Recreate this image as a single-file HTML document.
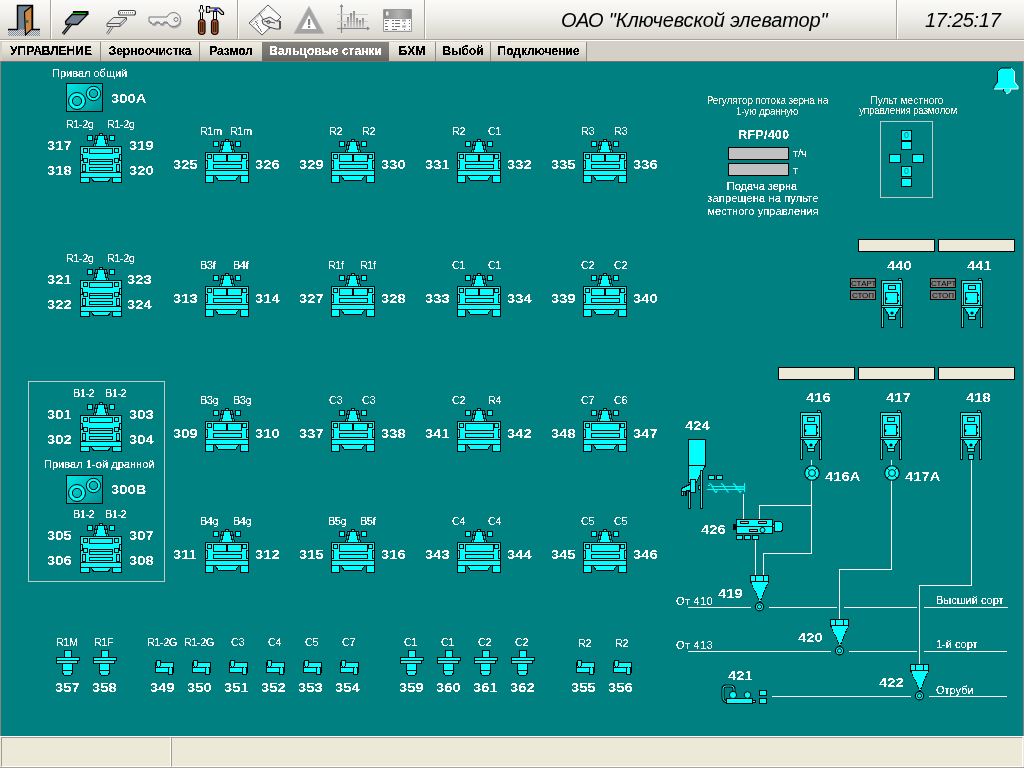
<!DOCTYPE html>
<html><head><meta charset="utf-8"><title>Вальцовые станки</title>
<style>
*{margin:0;padding:0;box-sizing:border-box}
html,body{width:1024px;height:768px;overflow:hidden;background:#d4d0c8;font-family:"Liberation Sans",sans-serif}
.t{position:absolute;white-space:nowrap;color:#fff;filter:url(#cr)}
.tab span{filter:url(#cr);display:inline-block}
.i{position:absolute;overflow:visible}
#tb{position:absolute;left:0;top:0;width:1024px;height:39px;background:linear-gradient(#fbfbfa,#f1f0ec 40%,#d8d4cc)}
.sep{position:absolute;top:0;width:2px;height:39px;background:#a8a498;border-right:1px solid #fff}
#tbl{position:absolute;left:0;top:39px;width:1024px;height:1px;background:#a8a498}
#tbw{position:absolute;left:0;top:40px;width:1024px;height:1px;background:#fff}
#tabs{position:absolute;left:0;top:41px;width:1024px;height:21px;background:#d4d0c8}
.tab{position:absolute;top:42px;height:19px;background:linear-gradient(#f0eee2,#dfdcd2 50%,#c2bfb6);font-weight:bold;font-size:12px;line-height:19px;text-align:center;color:#000;white-space:nowrap}
.tab.s{background:linear-gradient(#86847e,#76746e 60%,#66645e);color:#fff}
.tsep{position:absolute;top:42px;width:1px;height:19px;background:#8c8a84}
#main{position:absolute;left:0;top:61px;width:1024px;height:675px;background:#008080;border-left:1px solid #8c8484;border-top:1px solid #7a7070;border-right:1px solid #8c8484}
#sb{position:absolute;left:0;top:736px;width:1024px;height:32px;background:#ece9d8;border-top:1px solid #fff;border-bottom:1px solid #a8a598}
.sp{position:absolute;top:0;height:30px;border:1px solid;border-color:#a09d90 #fff #fff #a09d90;background:#ece9d8}
.box{position:absolute;border:1px solid #c8c8c8}
.gb{position:absolute;background:#c0c0c0;border:1px solid #000;box-sizing:content-box}
.cr{position:absolute;background:#ece9d8;border:1px solid #000;box-sizing:content-box}
.cb{position:absolute;background:#0ff;border:1px solid #000;box-sizing:content-box;font-size:9px;line-height:9px;text-align:center;color:#008080}
.btn{position:absolute;width:26px;height:10px;background:#808080;border:1px solid #000;font-size:8px;line-height:9px;text-align:center;color:#000;letter-spacing:0px}
.btn span{will-change:transform;display:inline-block}
.wl{position:absolute;background:#fff}
</style></head><body>

<svg width="0" height="0" style="position:absolute">
<defs>
<filter id="cr2" x="-20%" y="-60%" width="140%" height="220%"><feComponentTransfer><feFuncA type="discrete" tableValues="0 1 1 1"/></feComponentTransfer></filter>
<filter id="cr5" x="-20%" y="-60%" width="140%" height="220%"><feComponentTransfer><feFuncA type="discrete" tableValues="0 1"/></feComponentTransfer></filter>
<filter id="cr" x="-20%" y="-60%" width="140%" height="220%"><feComponentTransfer><feFuncA type="discrete" tableValues="0 0 1 1 1"/></feComponentTransfer></filter>
<linearGradient id="mg" x1="0" y1="0" x2="1" y2="1">
  <stop offset="0" stop-color="#00e8e8"/><stop offset="1" stop-color="#008c8c"/>
</linearGradient>
<symbol id="m1" viewBox="0 0 44 44">
 <g fill="#0ff" stroke="#000" stroke-width="1" shape-rendering="crispEdges">
  <rect x="8.5" y="2.5" width="5" height="5"/><rect x="30.5" y="2.5" width="5" height="5"/>
  <path d="M16,2 H28 L30,13.5 H14 Z" fill="#000" stroke="none"/>
  <path d="M19.5,3 H24.5 L27,13 H17 Z" fill="#0ff" stroke="none"/>
  <path d="M17.5,3 L15.5,13 M26.5,3 L28.5,13" stroke="#0ff" stroke-dasharray="3,1" shape-rendering="auto"/>
  <rect x="20.5" y="0.5" width="3" height="2"/>
  <rect x="0.5" y="13.5" width="43" height="23"/>
  <line x1="0" y1="31.5" x2="44" y2="31.5"/>
  <rect x="2.5" y="15.5" width="4" height="4"/><rect x="37.5" y="15.5" width="4" height="4"/>
  <rect x="0.5" y="21.5" width="2" height="8"/><rect x="41.5" y="21.5" width="2" height="8"/>
  <rect x="8.5" y="25.5" width="28" height="4"/>
  <rect x="0.5" y="36.5" width="8" height="7"/><rect x="35.5" y="36.5" width="8" height="7"/>
  <polygon points="10,36.5 34,36.5 30.5,41.5 13.5,41.5"/>
 </g>
</symbol>
<symbol id="m1d" viewBox="0 0 44 44">
 <use href="#m1"/>
 <g fill="#0ff" stroke="#000" stroke-width="1" shape-rendering="crispEdges">
  <rect x="8.5" y="15.5" width="28" height="7"/>
  <rect x="21" y="15" width="2" height="8" fill="#000" stroke="none"/>
 </g>
</symbol>
<symbol id="m1n" viewBox="0 0 44 44">
 <use href="#m1"/>
 <g fill="#0ff" stroke="#000" stroke-width="1" shape-rendering="crispEdges">
  <rect x="8.5" y="15.5" width="28" height="7"/>
 </g>
</symbol>
<symbol id="m2" viewBox="0 0 42 50">
 <g fill="#0ff" stroke="#000" stroke-width="1" shape-rendering="crispEdges">
  <rect x="7.5" y="2.5" width="5" height="5"/><rect x="29.5" y="2.5" width="5" height="5"/>
  <path d="M15,2 H27 L29,13.5 H13 Z" fill="#000" stroke="none"/>
  <path d="M18.5,3 H23.5 L26,13 H16 Z" fill="#0ff" stroke="none"/>
  <path d="M16.5,3 L14.5,13 M25.5,3 L27.5,13" stroke="#0ff" stroke-dasharray="3,1" shape-rendering="auto"/>
  <rect x="19.5" y="0.5" width="3" height="2"/>
  <rect x="0.5" y="13.5" width="41" height="31"/>
  <line x1="0" y1="39.5" x2="42" y2="39.5"/>
  <rect x="3.5" y="15.5" width="4" height="4"/><rect x="34.5" y="15.5" width="4" height="4"/>
  <rect x="9.5" y="15.5" width="23" height="5"/>
  <rect x="0.5" y="21.5" width="2" height="6"/><rect x="39.5" y="21.5" width="2" height="6"/>
  <rect x="3.5" y="25.5" width="4" height="4"/><rect x="34.5" y="25.5" width="4" height="4"/>
  <rect x="9.5" y="26.5" width="23" height="5"/><line x1="9" y1="28.5" x2="33" y2="28.5"/>
  <rect x="9.5" y="34.5" width="23" height="3"/>
  <rect x="2.5" y="31.5" width="3" height="7"/><rect x="36.5" y="31.5" width="3" height="7"/>
  <rect x="0.5" y="44.5" width="9" height="5"/><rect x="32.5" y="44.5" width="9" height="5"/>
  <polygon points="10.5,44.5 31.5,44.5 28,48.5 14,48.5"/>
 </g>
</symbol>
<symbol id="mot" viewBox="0 0 37 29">
 <rect x="0.5" y="0.5" width="36" height="28" fill="url(#mg)" stroke="#000" shape-rendering="crispEdges"/>
 <circle cx="11" cy="18" r="6.5" fill="none" stroke="#0ff" stroke-width="3.2"/>
 <circle cx="11" cy="18" r="8.5" fill="none" stroke="#000" stroke-width="1"/>
 <circle cx="11" cy="18" r="4.6" fill="none" stroke="#000" stroke-width="1"/>
 <circle cx="27.5" cy="10.5" r="5.6" fill="none" stroke="#0ff" stroke-width="2.4"/>
 <circle cx="27.5" cy="10.5" r="7.2" fill="none" stroke="#000" stroke-width="1"/>
 <circle cx="27.5" cy="10.5" r="4.2" fill="none" stroke="#000" stroke-width="1"/>
</symbol>
<symbol id="det" viewBox="0 0 24 26">
 <g fill="#0ff" stroke="#000" stroke-width="1" shape-rendering="crispEdges">
  <rect x="8.5" y="0.5" width="7" height="7"/>
  <rect x="6.5" y="12.5" width="10" height="8"/>
  <path d="M6.5,20.5 H16.5 V23 L14.5,25.5 H8.5 L6.5,23 Z"/>
  <rect x="0.5" y="10.5" width="21" height="2.5"/>
  <rect x="0.5" y="7.5" width="23" height="3"/>
 </g>
</symbol>
<symbol id="siv" viewBox="0 0 19 15">
 <g fill="#0ff" stroke="#000" stroke-width="1" shape-rendering="crispEdges">
  <rect x="0.5" y="2.5" width="18" height="5"/>
  <rect x="0.5" y="7.5" width="18" height="5"/>
  <rect x="2" y="1" width="3" height="5.5" stroke="none"/>
  <path d="M1.5,6 V0.5 H5.5 V6" fill="none"/>
  <rect x="14" y="7" width="3" height="7" stroke="none"/>
  <path d="M13.5,7.5 V14.5 H17.5 V7.5" fill="none"/>
  <path d="M2,6.5 H5 M14,7.5 H17" stroke="#000" stroke-dasharray="1,1"/>
 </g>
</symbol>
<symbol id="bin" viewBox="0 0 22 50">
 <g fill="#0ff" stroke="#000" stroke-width="1" shape-rendering="crispEdges">
  <rect x="17.5" y="0.5" width="3" height="2"/>
  <rect x="0.5" y="2.5" width="21" height="25"/>
  <rect x="2.5" y="5.5" width="17" height="22"/>
  <rect x="7.5" y="7.5" width="7" height="4"/>
  <rect x="4.5" y="14.5" width="12" height="11"/>
  <rect x="0.5" y="27.5" width="21" height="2"/>
  <rect x="0.5" y="29.5" width="2" height="20"/><rect x="19.5" y="29.5" width="2" height="20"/>
  <polygon points="3,29.5 19,29.5 14,38 8,38"/>
  <rect x="7.5" y="38.5" width="7" height="3"/>
 </g>
 <circle cx="11" cy="35" r="1.6" fill="#000"/>
 <rect x="16.5" y="16" width="1.5" height="2" fill="#000"/><rect x="16.5" y="22" width="1.5" height="2" fill="#000"/><rect x="5" y="19.5" width="1.2" height="2.5" fill="#000"/>
</symbol>
<symbol id="cyc" viewBox="0 0 19 37">
 <g fill="#0ff" stroke="#000" stroke-width="1" shape-rendering="crispEdges">
  <polygon points="0.5,6.5 18.5,6.5 10,27" stroke-dasharray="2,1"/>
  <rect x="0.5" y="0.5" width="18" height="6"/>
  <line x1="5.5" y1="0" x2="5.5" y2="7"/><line x1="13.5" y1="0" x2="13.5" y2="7"/>
 </g>
 <circle cx="9.5" cy="31.8" r="4.1" fill="#0ff" stroke="#000" stroke-width="1.2"/>
 <circle cx="9.5" cy="31.8" r="2.1" fill="#0ff" stroke="#000" stroke-width="1"/>
</symbol>
<symbol id="mc" viewBox="0 0 16 16">
 <circle cx="8" cy="8" r="7.3" fill="#0ff" stroke="#000" stroke-width="1.1"/>
 <path d="M2.8,2.8 L13.2,13.2 M13.2,2.8 L2.8,13.2" stroke="#000" stroke-width="0.9"/>
 <circle cx="8" cy="8" r="3.4" fill="#0ff" stroke="#000" stroke-width="1"/>
</symbol>
</defs>
</svg>

<div id="tb"></div>
<div class="sep" style="left:50px"></div>
<div class="sep" style="left:237px"></div>
<div class="sep" style="left:424px"></div>
<div class="sep" style="left:896px"></div>
<div id="tbl"></div><div id="tbw"></div>

<svg class="i" style="left:0;top:0" width="430" height="40" viewBox="0 0 430 40">
<defs>
<pattern id="hatch" width="2" height="2" patternUnits="userSpaceOnUse"><rect width="1" height="1" fill="#7888a0"/><rect x="1" y="1" width="1" height="1" fill="#7888a0"/></pattern>
</defs>
<!-- door -->
<rect x="8" y="29" width="32" height="7" fill="url(#hatch)"/>
<path d="M8,29.5 H17.5 V5.5 H32.5 V29.5 H40" fill="#708090" stroke="#000" stroke-width="1.5"/>
<polygon points="24.5,12 32,6 32,29 25.5,35" fill="#d08840" stroke="#000" stroke-width="1.2"/>
<rect x="26" y="20" width="2.5" height="3" fill="#2a6a70"/>
<!-- plug green -->
<polygon points="73,11 88.5,11 88.5,14.5 72.5,14.5" fill="#000"/>
<line x1="73" y1="13.5" x2="86" y2="13.5" stroke="#0f0" stroke-width="1.3"/>
<polygon points="65.5,21.5 72,14.5 87.5,14.5 77.5,24.5 66,24.5" fill="#708090" stroke="#000" stroke-width="1.3"/>
<line x1="71" y1="24" x2="63" y2="34" stroke="#000" stroke-width="3"/>
<line x1="71" y1="24" x2="63" y2="34" stroke="#708090" stroke-width="1.2"/>
<!-- plug gray -->
<rect x="118.5" y="10.5" width="17" height="4.5" rx="2" fill="#fff" stroke="#444" stroke-width="1.2"/>
<line x1="120" y1="12.8" x2="134" y2="12.8" stroke="#555" stroke-dasharray="1,1"/>
<polygon points="107,23.5 113.5,17.5 126.5,17.5 126.5,20 120,26.5 107,26.5" fill="#e4e4e4" stroke="#555" stroke-width="1"/>
<polyline points="107,23.5 120,23.5 126.5,17.5" fill="none" stroke="#555" stroke-width="1"/>
<line x1="120" y1="23.5" x2="120" y2="26.5" stroke="#555" stroke-width="1"/>
<path d="M111,26.5 L106.5,33.5 M113.5,26.5 L108,34.5" stroke="#666" stroke-width="1" fill="none"/>
<!-- key -->
<path d="M149,17 H167 A7,7 0 1 1 167,22 H164 L163,24 H160 L159,22 H156 L155,24 H152 L151,22 H149 Z" fill="#aaa" transform="translate(1,2)"/>
<path d="M149,17 H167 A7,7 0 1 1 167,22 H164 L163,24 H160 L159,22 H156 L155,24 H152 L151,22 H149 Z" fill="#f0f0f0" stroke="#777" stroke-width="1"/>
<circle cx="176" cy="19.5" r="2" fill="none" stroke="#777"/>
<!-- tools -->
<path d="M200.5,5.5 H202.5 V9 L203.8,10 V11.5 L202.5,12.5 V19.5 H200.5 V12.5 L199.2,11.5 V10 L200.5,9 Z" fill="#eee" stroke="#000" stroke-width="1"/>
<rect x="198.5" y="19.5" width="6.5" height="15" rx="3.2" fill="#b45a2c" stroke="#000" stroke-width="1.2"/>
<line x1="200.8" y1="22" x2="200.8" y2="32" stroke="#000" stroke-width="0.9"/><line x1="202.8" y1="22" x2="202.8" y2="32" stroke="#000" stroke-width="0.9"/>
<path d="M206.5,6.5 H209.5 V8 H219 L223.5,12.5 V14.5 H221.5 L218,11 H209.5 V12.5 H206.5 Z" fill="#e8e8e8" stroke="#000" stroke-width="1.2"/>
<polygon points="213.5,10.5 215,8.6 218,8.6 216.5,10.5" fill="#1010ff"/>
<rect x="213.5" y="11.5" width="3" height="8" fill="#eee" stroke="#000" stroke-width="1"/>
<rect x="211.5" y="19.5" width="6.5" height="15" rx="3.2" fill="#b45a2c" stroke="#000" stroke-width="1.2"/>
<line x1="213.8" y1="22" x2="213.8" y2="32" stroke="#000" stroke-width="0.9"/><line x1="215.8" y1="22" x2="215.8" y2="32" stroke="#000" stroke-width="0.9"/>
<!-- doc hand (gray) -->
<polygon points="249,23 268,5 281,17 262,35" fill="#fafafa" stroke="#444" stroke-width="0.9"/>
<path d="M251,23 L266,9 M253,25 L258,20" stroke="#777" stroke-width="1" stroke-dasharray="1,1"/>
<path d="M259,13 L270,29" stroke="#555" stroke-width="0.9"/>
<path d="M256,24 L259,27 M258,27 L261,30 M255,21 L258,24 M260,30 L262,32" stroke="#666" stroke-width="0.9"/>
<path d="M262,20 L270,17 L276,21 H280 V29 H276 L269,27 L263,24 Z" fill="#eaeaea" stroke="#333" stroke-width="0.9"/>
<rect x="279" y="21" width="2" height="8" fill="#555"/>
<circle cx="268.5" cy="22" r="1.6" fill="none" stroke="#333" stroke-width="0.8"/>
<line x1="264" y1="21" x2="275" y2="23" stroke="#333" stroke-width="0.8"/>
<!-- warning -->
<polygon points="309,6.5 324,33.5 294,33.5" fill="#a4a4a4" stroke="#b8b8b8" stroke-width="1" stroke-linejoin="round"/>
<polygon points="309,15 316.5,29 301.5,29" fill="#fff"/>
<rect x="308" y="19" width="2.2" height="6" fill="#808080"/><rect x="308" y="26" width="2.2" height="2" fill="#808080"/>
<!-- chart -->
<line x1="341.5" y1="5" x2="341.5" y2="33" stroke="#888" stroke-width="1.2"/>
<line x1="337" y1="28.5" x2="369" y2="28.5" stroke="#888" stroke-width="1.2"/>
<line x1="337" y1="14.5" x2="368" y2="14.5" stroke="#ccc"/><line x1="337" y1="21.5" x2="368" y2="21.5" stroke="#ccc"/>
<defs><linearGradient id="bg1" x1="0" y1="0" x2="0" y2="1"><stop offset="0" stop-color="#8e8e8e"/><stop offset="1" stop-color="#cfcfcf"/></linearGradient></defs><polygon points="341.5,4 339.5,7 343.5,7" fill="#888"/><polygon points="370,28.5 367,26.5 367,30.5" fill="#888"/>
<g fill="url(#bg1)"><rect x="344" y="24" width="2" height="4"/><rect x="347" y="17" width="2" height="11"/><rect x="350" y="13" width="2" height="15"/><rect x="353" y="11" width="2" height="17"/><rect x="356" y="18" width="2" height="10"/><rect x="359" y="20" width="2" height="8"/><rect x="362" y="18" width="2" height="10"/></g>
<g fill="#ddd"><rect x="344" y="29" width="21" height="3"/></g>
<!-- table -->
<defs><linearGradient id="thg" x1="0" y1="0" x2="1" y2="0"><stop offset="0" stop-color="#888"/><stop offset="0.55" stop-color="#b4b4b4"/><stop offset="1" stop-color="#8a8a8a"/></linearGradient></defs>
<rect x="383" y="9" width="29" height="23" rx="1" fill="#9a9a9a"/>
<rect x="384" y="10" width="27" height="8.5" fill="url(#thg)"/>
<rect x="386" y="11.5" width="2.5" height="4" fill="#eee"/>
<rect x="384" y="19" width="27" height="11.8" fill="#fbfbfb"/>
<g fill="#707070"><rect x="385" y="20" width="4" height="1"/><rect x="392" y="20" width="2" height="1"/><rect x="395" y="20" width="5" height="1"/><rect x="402" y="19.5" width="4" height="2" fill="#aaa"/><rect x="409" y="20" width="1" height="1"/>
<rect x="385" y="23" width="2" height="1"/><rect x="392" y="23" width="2" height="1"/><rect x="395" y="23" width="5" height="1"/><rect x="404" y="23" width="1" height="1"/><rect x="409" y="23" width="1" height="1"/>
<rect x="385" y="26" width="3" height="1"/><rect x="392" y="26" width="2" height="1"/><rect x="395" y="26" width="5" height="1"/><rect x="402" y="25.5" width="4" height="2" fill="#aaa"/><rect x="409" y="26" width="1" height="1"/>
<rect x="385" y="29" width="3" height="1"/><rect x="392" y="29" width="5" height="1"/><rect x="404" y="29" width="1" height="1"/><rect x="409" y="29" width="1" height="1"/></g>
</svg>

<div class="t" style="left:561px;top:10px;font-size:20px;line-height:20px;font-style:italic;color:#000;letter-spacing:-0.15px;filter:none;will-change:transform">ОАО "Ключевской элеватор"</div>
<div class="t" style="left:925px;top:10px;font-size:20px;line-height:20px;font-style:italic;color:#000;letter-spacing:-0.3px;filter:none;will-change:transform">17:25:17</div>
<div id="tabs"></div>
<div class="tab" style="left:2px;width:98px"><span>УПРАВЛЕНИЕ</span></div>
<div class="tsep" style="left:100px"></div>
<div class="tab" style="left:101px;width:98px"><span>Зерноочистка</span></div>
<div class="tsep" style="left:199px"></div>
<div class="tab" style="left:200px;width:62px"><span>Размол</span></div>
<div class="tab s" style="left:262px;width:127px"><span>Вальцовые станки</span></div>
<div class="tab" style="left:389px;width:46px"><span>БХМ</span></div>
<div class="tsep" style="left:435px"></div>
<div class="tab" style="left:436px;width:54px"><span>Выбой</span></div>
<div class="tsep" style="left:490px"></div>
<div class="tab" style="left:491px;width:95px"><span>Подключение</span></div>
<div class="tsep" style="left:586px"></div>
<div id="main"></div>
<div class="t" style="left:52px;top:68px;font-size:11px;line-height:11px;">Привал общий</div>
<svg class="i" style="left:66px;top:83px" width="37" height="29"><use href="#mot"/></svg>
<div class="t" style="left:111px;top:93px;font-size:12px;line-height:12px;font-weight:bold;transform:scaleX(1.23);transform-origin:0 0;filter:url(#cr5);">300A</div>
<div class="t" style="left:66px;top:119px;font-size:11px;line-height:11px;letter-spacing:-0.5px;">R1-2g</div>
<div class="t" style="left:107px;top:119px;font-size:11px;line-height:11px;letter-spacing:-0.5px;">R1-2g</div>
<svg class="i" style="left:80px;top:133px" width="42" height="50"><use href="#m2"/></svg>
<div class="t" style="left:47px;top:140px;font-size:12px;line-height:12px;font-weight:bold;transform:scaleX(1.23);transform-origin:0 0;filter:url(#cr5);">317</div>
<div class="t" style="left:47px;top:165px;font-size:12px;line-height:12px;font-weight:bold;transform:scaleX(1.23);transform-origin:0 0;filter:url(#cr5);">318</div>
<div class="t" style="left:129px;top:140px;font-size:12px;line-height:12px;font-weight:bold;transform:scaleX(1.23);transform-origin:0 0;filter:url(#cr5);">319</div>
<div class="t" style="left:129px;top:165px;font-size:12px;line-height:12px;font-weight:bold;transform:scaleX(1.23);transform-origin:0 0;filter:url(#cr5);">320</div>
<div class="t" style="left:66px;top:253px;font-size:11px;line-height:11px;letter-spacing:-0.5px;">R1-2g</div>
<div class="t" style="left:107px;top:253px;font-size:11px;line-height:11px;letter-spacing:-0.5px;">R1-2g</div>
<svg class="i" style="left:80px;top:267px" width="42" height="50"><use href="#m2"/></svg>
<div class="t" style="left:47px;top:274px;font-size:12px;line-height:12px;font-weight:bold;transform:scaleX(1.23);transform-origin:0 0;filter:url(#cr5);">321</div>
<div class="t" style="left:47px;top:299px;font-size:12px;line-height:12px;font-weight:bold;transform:scaleX(1.23);transform-origin:0 0;filter:url(#cr5);">322</div>
<div class="t" style="left:127px;top:274px;font-size:12px;line-height:12px;font-weight:bold;transform:scaleX(1.23);transform-origin:0 0;filter:url(#cr5);">323</div>
<div class="t" style="left:127px;top:299px;font-size:12px;line-height:12px;font-weight:bold;transform:scaleX(1.23);transform-origin:0 0;filter:url(#cr5);">324</div>
<div class="box" style="left:28px;top:381px;width:137px;height:201px"></div>
<div class="t" style="left:73px;top:388px;font-size:11px;line-height:11px;letter-spacing:-0.5px;">B1-2</div>
<div class="t" style="left:105px;top:388px;font-size:11px;line-height:11px;letter-spacing:-0.5px;">B1-2</div>
<svg class="i" style="left:80px;top:402px" width="42" height="50"><use href="#m2"/></svg>
<div class="t" style="left:47px;top:409px;font-size:12px;line-height:12px;font-weight:bold;transform:scaleX(1.23);transform-origin:0 0;filter:url(#cr5);">301</div>
<div class="t" style="left:47px;top:434px;font-size:12px;line-height:12px;font-weight:bold;transform:scaleX(1.23);transform-origin:0 0;filter:url(#cr5);">302</div>
<div class="t" style="left:129px;top:409px;font-size:12px;line-height:12px;font-weight:bold;transform:scaleX(1.23);transform-origin:0 0;filter:url(#cr5);">303</div>
<div class="t" style="left:129px;top:434px;font-size:12px;line-height:12px;font-weight:bold;transform:scaleX(1.23);transform-origin:0 0;filter:url(#cr5);">304</div>
<div class="t" style="left:44px;top:459px;font-size:11px;line-height:11px;letter-spacing:0.05px;">Привал 1-ой дранной</div>
<svg class="i" style="left:66px;top:475px" width="37" height="29"><use href="#mot"/></svg>
<div class="t" style="left:111px;top:484px;font-size:12px;line-height:12px;font-weight:bold;transform:scaleX(1.23);transform-origin:0 0;filter:url(#cr5);">300B</div>
<div class="t" style="left:73px;top:509px;font-size:11px;line-height:11px;letter-spacing:-0.5px;">B1-2</div>
<div class="t" style="left:105px;top:509px;font-size:11px;line-height:11px;letter-spacing:-0.5px;">B1-2</div>
<svg class="i" style="left:80px;top:523px" width="42" height="50"><use href="#m2"/></svg>
<div class="t" style="left:47px;top:530px;font-size:12px;line-height:12px;font-weight:bold;transform:scaleX(1.23);transform-origin:0 0;filter:url(#cr5);">305</div>
<div class="t" style="left:47px;top:555px;font-size:12px;line-height:12px;font-weight:bold;transform:scaleX(1.23);transform-origin:0 0;filter:url(#cr5);">306</div>
<div class="t" style="left:129px;top:530px;font-size:12px;line-height:12px;font-weight:bold;transform:scaleX(1.23);transform-origin:0 0;filter:url(#cr5);">307</div>
<div class="t" style="left:129px;top:555px;font-size:12px;line-height:12px;font-weight:bold;transform:scaleX(1.23);transform-origin:0 0;filter:url(#cr5);">308</div>
<svg class="i" style="left:205px;top:139px" width="44" height="44"><use href="#m1d"/></svg>
<div class="t" style="left:173px;top:159px;font-size:12px;line-height:12px;font-weight:bold;transform:scaleX(1.23);transform-origin:0 0;filter:url(#cr5);">325</div>
<div class="t" style="left:255px;top:159px;font-size:12px;line-height:12px;font-weight:bold;transform:scaleX(1.23);transform-origin:0 0;filter:url(#cr5);">326</div>
<div class="t" style="left:200px;top:126px;font-size:11px;line-height:11px;letter-spacing:-0.5px;">R1m</div>
<div class="t" style="left:230px;top:126px;font-size:11px;line-height:11px;letter-spacing:-0.5px;">R1m</div>
<svg class="i" style="left:331px;top:139px" width="44" height="44"><use href="#m1d"/></svg>
<div class="t" style="left:299px;top:159px;font-size:12px;line-height:12px;font-weight:bold;transform:scaleX(1.23);transform-origin:0 0;filter:url(#cr5);">329</div>
<div class="t" style="left:381px;top:159px;font-size:12px;line-height:12px;font-weight:bold;transform:scaleX(1.23);transform-origin:0 0;filter:url(#cr5);">330</div>
<div class="t" style="left:329px;top:126px;font-size:11px;line-height:11px;letter-spacing:-0.5px;">R2</div>
<div class="t" style="left:362px;top:126px;font-size:11px;line-height:11px;letter-spacing:-0.5px;">R2</div>
<svg class="i" style="left:457px;top:139px" width="44" height="44"><use href="#m1d"/></svg>
<div class="t" style="left:425px;top:159px;font-size:12px;line-height:12px;font-weight:bold;transform:scaleX(1.23);transform-origin:0 0;filter:url(#cr5);">331</div>
<div class="t" style="left:507px;top:159px;font-size:12px;line-height:12px;font-weight:bold;transform:scaleX(1.23);transform-origin:0 0;filter:url(#cr5);">332</div>
<div class="t" style="left:452px;top:126px;font-size:11px;line-height:11px;letter-spacing:-0.5px;">R2</div>
<div class="t" style="left:488px;top:126px;font-size:11px;line-height:11px;letter-spacing:-0.5px;">C1</div>
<svg class="i" style="left:583px;top:139px" width="44" height="44"><use href="#m1d"/></svg>
<div class="t" style="left:551px;top:159px;font-size:12px;line-height:12px;font-weight:bold;transform:scaleX(1.23);transform-origin:0 0;filter:url(#cr5);">335</div>
<div class="t" style="left:633px;top:159px;font-size:12px;line-height:12px;font-weight:bold;transform:scaleX(1.23);transform-origin:0 0;filter:url(#cr5);">336</div>
<div class="t" style="left:581px;top:126px;font-size:11px;line-height:11px;letter-spacing:-0.5px;">R3</div>
<div class="t" style="left:614px;top:126px;font-size:11px;line-height:11px;letter-spacing:-0.5px;">R3</div>
<svg class="i" style="left:205px;top:273px" width="44" height="44"><use href="#m1d"/></svg>
<div class="t" style="left:173px;top:293px;font-size:12px;line-height:12px;font-weight:bold;transform:scaleX(1.23);transform-origin:0 0;filter:url(#cr5);">313</div>
<div class="t" style="left:255px;top:293px;font-size:12px;line-height:12px;font-weight:bold;transform:scaleX(1.23);transform-origin:0 0;filter:url(#cr5);">314</div>
<div class="t" style="left:200px;top:260px;font-size:11px;line-height:11px;letter-spacing:-0.5px;">B3f</div>
<div class="t" style="left:233px;top:260px;font-size:11px;line-height:11px;letter-spacing:-0.5px;">B4f</div>
<svg class="i" style="left:331px;top:273px" width="44" height="44"><use href="#m1d"/></svg>
<div class="t" style="left:299px;top:293px;font-size:12px;line-height:12px;font-weight:bold;transform:scaleX(1.23);transform-origin:0 0;filter:url(#cr5);">327</div>
<div class="t" style="left:381px;top:293px;font-size:12px;line-height:12px;font-weight:bold;transform:scaleX(1.23);transform-origin:0 0;filter:url(#cr5);">328</div>
<div class="t" style="left:328px;top:260px;font-size:11px;line-height:11px;letter-spacing:-0.5px;">R1f</div>
<div class="t" style="left:360px;top:260px;font-size:11px;line-height:11px;letter-spacing:-0.5px;">R1f</div>
<svg class="i" style="left:457px;top:273px" width="44" height="44"><use href="#m1d"/></svg>
<div class="t" style="left:425px;top:293px;font-size:12px;line-height:12px;font-weight:bold;transform:scaleX(1.23);transform-origin:0 0;filter:url(#cr5);">333</div>
<div class="t" style="left:507px;top:293px;font-size:12px;line-height:12px;font-weight:bold;transform:scaleX(1.23);transform-origin:0 0;filter:url(#cr5);">334</div>
<div class="t" style="left:452px;top:260px;font-size:11px;line-height:11px;letter-spacing:-0.5px;">C1</div>
<div class="t" style="left:488px;top:260px;font-size:11px;line-height:11px;letter-spacing:-0.5px;">C1</div>
<svg class="i" style="left:583px;top:273px" width="44" height="44"><use href="#m1d"/></svg>
<div class="t" style="left:551px;top:293px;font-size:12px;line-height:12px;font-weight:bold;transform:scaleX(1.23);transform-origin:0 0;filter:url(#cr5);">339</div>
<div class="t" style="left:633px;top:293px;font-size:12px;line-height:12px;font-weight:bold;transform:scaleX(1.23);transform-origin:0 0;filter:url(#cr5);">340</div>
<div class="t" style="left:581px;top:260px;font-size:11px;line-height:11px;letter-spacing:-0.5px;">C2</div>
<div class="t" style="left:614px;top:260px;font-size:11px;line-height:11px;letter-spacing:-0.5px;">C2</div>
<svg class="i" style="left:205px;top:408px" width="44" height="44"><use href="#m1d"/></svg>
<div class="t" style="left:173px;top:428px;font-size:12px;line-height:12px;font-weight:bold;transform:scaleX(1.23);transform-origin:0 0;filter:url(#cr5);">309</div>
<div class="t" style="left:255px;top:428px;font-size:12px;line-height:12px;font-weight:bold;transform:scaleX(1.23);transform-origin:0 0;filter:url(#cr5);">310</div>
<div class="t" style="left:200px;top:395px;font-size:11px;line-height:11px;letter-spacing:-0.5px;">B3g</div>
<div class="t" style="left:233px;top:395px;font-size:11px;line-height:11px;letter-spacing:-0.5px;">B3g</div>
<svg class="i" style="left:331px;top:408px" width="44" height="44"><use href="#m1d"/></svg>
<div class="t" style="left:299px;top:428px;font-size:12px;line-height:12px;font-weight:bold;transform:scaleX(1.23);transform-origin:0 0;filter:url(#cr5);">337</div>
<div class="t" style="left:381px;top:428px;font-size:12px;line-height:12px;font-weight:bold;transform:scaleX(1.23);transform-origin:0 0;filter:url(#cr5);">338</div>
<div class="t" style="left:329px;top:395px;font-size:11px;line-height:11px;letter-spacing:-0.5px;">C3</div>
<div class="t" style="left:362px;top:395px;font-size:11px;line-height:11px;letter-spacing:-0.5px;">C3</div>
<svg class="i" style="left:457px;top:408px" width="44" height="44"><use href="#m1n"/></svg>
<div class="t" style="left:425px;top:428px;font-size:12px;line-height:12px;font-weight:bold;transform:scaleX(1.23);transform-origin:0 0;filter:url(#cr5);">341</div>
<div class="t" style="left:507px;top:428px;font-size:12px;line-height:12px;font-weight:bold;transform:scaleX(1.23);transform-origin:0 0;filter:url(#cr5);">342</div>
<div class="t" style="left:452px;top:395px;font-size:11px;line-height:11px;letter-spacing:-0.5px;">C2</div>
<div class="t" style="left:488px;top:395px;font-size:11px;line-height:11px;letter-spacing:-0.5px;">R4</div>
<svg class="i" style="left:583px;top:408px" width="44" height="44"><use href="#m1n"/></svg>
<div class="t" style="left:551px;top:428px;font-size:12px;line-height:12px;font-weight:bold;transform:scaleX(1.23);transform-origin:0 0;filter:url(#cr5);">348</div>
<div class="t" style="left:633px;top:428px;font-size:12px;line-height:12px;font-weight:bold;transform:scaleX(1.23);transform-origin:0 0;filter:url(#cr5);">347</div>
<div class="t" style="left:581px;top:395px;font-size:11px;line-height:11px;letter-spacing:-0.5px;">C7</div>
<div class="t" style="left:614px;top:395px;font-size:11px;line-height:11px;letter-spacing:-0.5px;">C6</div>
<svg class="i" style="left:205px;top:529px" width="44" height="44"><use href="#m1d"/></svg>
<div class="t" style="left:173px;top:549px;font-size:12px;line-height:12px;font-weight:bold;transform:scaleX(1.23);transform-origin:0 0;filter:url(#cr5);">311</div>
<div class="t" style="left:255px;top:549px;font-size:12px;line-height:12px;font-weight:bold;transform:scaleX(1.23);transform-origin:0 0;filter:url(#cr5);">312</div>
<div class="t" style="left:200px;top:516px;font-size:11px;line-height:11px;letter-spacing:-0.5px;">B4g</div>
<div class="t" style="left:233px;top:516px;font-size:11px;line-height:11px;letter-spacing:-0.5px;">B4g</div>
<svg class="i" style="left:331px;top:529px" width="44" height="44"><use href="#m1n"/></svg>
<div class="t" style="left:299px;top:549px;font-size:12px;line-height:12px;font-weight:bold;transform:scaleX(1.23);transform-origin:0 0;filter:url(#cr5);">315</div>
<div class="t" style="left:381px;top:549px;font-size:12px;line-height:12px;font-weight:bold;transform:scaleX(1.23);transform-origin:0 0;filter:url(#cr5);">316</div>
<div class="t" style="left:328px;top:516px;font-size:11px;line-height:11px;letter-spacing:-0.5px;">B5g</div>
<div class="t" style="left:360px;top:516px;font-size:11px;line-height:11px;letter-spacing:-0.5px;">B5f</div>
<svg class="i" style="left:457px;top:529px" width="44" height="44"><use href="#m1n"/></svg>
<div class="t" style="left:425px;top:549px;font-size:12px;line-height:12px;font-weight:bold;transform:scaleX(1.23);transform-origin:0 0;filter:url(#cr5);">343</div>
<div class="t" style="left:507px;top:549px;font-size:12px;line-height:12px;font-weight:bold;transform:scaleX(1.23);transform-origin:0 0;filter:url(#cr5);">344</div>
<div class="t" style="left:452px;top:516px;font-size:11px;line-height:11px;letter-spacing:-0.5px;">C4</div>
<div class="t" style="left:488px;top:516px;font-size:11px;line-height:11px;letter-spacing:-0.5px;">C4</div>
<svg class="i" style="left:583px;top:529px" width="44" height="44"><use href="#m1n"/></svg>
<div class="t" style="left:551px;top:549px;font-size:12px;line-height:12px;font-weight:bold;transform:scaleX(1.23);transform-origin:0 0;filter:url(#cr5);">345</div>
<div class="t" style="left:633px;top:549px;font-size:12px;line-height:12px;font-weight:bold;transform:scaleX(1.23);transform-origin:0 0;filter:url(#cr5);">346</div>
<div class="t" style="left:581px;top:516px;font-size:11px;line-height:11px;letter-spacing:-0.5px;">C5</div>
<div class="t" style="left:614px;top:516px;font-size:11px;line-height:11px;letter-spacing:-0.5px;">C5</div>
<svg class="i" style="left:56px;top:650px" width="24" height="26"><use href="#det"/></svg>
<div class="t" style="left:56px;top:637px;font-size:11px;line-height:11px;letter-spacing:-0.5px;">R1M</div>
<div class="t" style="left:55px;top:682px;font-size:12px;line-height:12px;font-weight:bold;transform:scaleX(1.23);transform-origin:0 0;filter:url(#cr5);">357</div>
<svg class="i" style="left:93px;top:650px" width="24" height="26"><use href="#det"/></svg>
<div class="t" style="left:94px;top:637px;font-size:11px;line-height:11px;letter-spacing:-0.5px;">R1F</div>
<div class="t" style="left:92px;top:682px;font-size:12px;line-height:12px;font-weight:bold;transform:scaleX(1.23);transform-origin:0 0;filter:url(#cr5);">358</div>
<svg class="i" style="left:155px;top:660px" width="19" height="15"><use href="#siv"/></svg>
<div class="t" style="left:147px;top:637px;font-size:11px;line-height:11px;letter-spacing:-0.5px;">R1-2G</div>
<div class="t" style="left:150px;top:682px;font-size:12px;line-height:12px;font-weight:bold;transform:scaleX(1.23);transform-origin:0 0;filter:url(#cr5);">349</div>
<svg class="i" style="left:192px;top:660px" width="19" height="15"><use href="#siv"/></svg>
<div class="t" style="left:184px;top:637px;font-size:11px;line-height:11px;letter-spacing:-0.5px;">R1-2G</div>
<div class="t" style="left:187px;top:682px;font-size:12px;line-height:12px;font-weight:bold;transform:scaleX(1.23);transform-origin:0 0;filter:url(#cr5);">350</div>
<svg class="i" style="left:229px;top:660px" width="19" height="15"><use href="#siv"/></svg>
<div class="t" style="left:231px;top:637px;font-size:11px;line-height:11px;letter-spacing:-0.5px;">C3</div>
<div class="t" style="left:224px;top:682px;font-size:12px;line-height:12px;font-weight:bold;transform:scaleX(1.23);transform-origin:0 0;filter:url(#cr5);">351</div>
<svg class="i" style="left:266px;top:660px" width="19" height="15"><use href="#siv"/></svg>
<div class="t" style="left:268px;top:637px;font-size:11px;line-height:11px;letter-spacing:-0.5px;">C4</div>
<div class="t" style="left:261px;top:682px;font-size:12px;line-height:12px;font-weight:bold;transform:scaleX(1.23);transform-origin:0 0;filter:url(#cr5);">352</div>
<svg class="i" style="left:303px;top:660px" width="19" height="15"><use href="#siv"/></svg>
<div class="t" style="left:305px;top:637px;font-size:11px;line-height:11px;letter-spacing:-0.5px;">C5</div>
<div class="t" style="left:298px;top:682px;font-size:12px;line-height:12px;font-weight:bold;transform:scaleX(1.23);transform-origin:0 0;filter:url(#cr5);">353</div>
<svg class="i" style="left:340px;top:660px" width="19" height="15"><use href="#siv"/></svg>
<div class="t" style="left:342px;top:637px;font-size:11px;line-height:11px;letter-spacing:-0.5px;">C7</div>
<div class="t" style="left:335px;top:682px;font-size:12px;line-height:12px;font-weight:bold;transform:scaleX(1.23);transform-origin:0 0;filter:url(#cr5);">354</div>
<svg class="i" style="left:400px;top:650px" width="24" height="26"><use href="#det"/></svg>
<div class="t" style="left:404px;top:637px;font-size:11px;line-height:11px;letter-spacing:-0.5px;">C1</div>
<div class="t" style="left:399px;top:682px;font-size:12px;line-height:12px;font-weight:bold;transform:scaleX(1.23);transform-origin:0 0;filter:url(#cr5);">359</div>
<svg class="i" style="left:437px;top:650px" width="24" height="26"><use href="#det"/></svg>
<div class="t" style="left:441px;top:637px;font-size:11px;line-height:11px;letter-spacing:-0.5px;">C1</div>
<div class="t" style="left:436px;top:682px;font-size:12px;line-height:12px;font-weight:bold;transform:scaleX(1.23);transform-origin:0 0;filter:url(#cr5);">360</div>
<svg class="i" style="left:474px;top:650px" width="24" height="26"><use href="#det"/></svg>
<div class="t" style="left:478px;top:637px;font-size:11px;line-height:11px;letter-spacing:-0.5px;">C2</div>
<div class="t" style="left:473px;top:682px;font-size:12px;line-height:12px;font-weight:bold;transform:scaleX(1.23);transform-origin:0 0;filter:url(#cr5);">361</div>
<svg class="i" style="left:511px;top:650px" width="24" height="26"><use href="#det"/></svg>
<div class="t" style="left:515px;top:637px;font-size:11px;line-height:11px;letter-spacing:-0.5px;">C2</div>
<div class="t" style="left:510px;top:682px;font-size:12px;line-height:12px;font-weight:bold;transform:scaleX(1.23);transform-origin:0 0;filter:url(#cr5);">362</div>
<svg class="i" style="left:576px;top:660px" width="19" height="15"><use href="#siv"/></svg>
<div class="t" style="left:578px;top:638px;font-size:11px;line-height:11px;letter-spacing:-0.5px;">R2</div>
<div class="t" style="left:571px;top:682px;font-size:12px;line-height:12px;font-weight:bold;transform:scaleX(1.23);transform-origin:0 0;filter:url(#cr5);">355</div>
<svg class="i" style="left:613px;top:660px" width="19" height="15"><use href="#siv"/></svg>
<div class="t" style="left:615px;top:638px;font-size:11px;line-height:11px;letter-spacing:-0.5px;">R2</div>
<div class="t" style="left:608px;top:682px;font-size:12px;line-height:12px;font-weight:bold;transform:scaleX(1.23);transform-origin:0 0;filter:url(#cr5);">356</div>
<div class="t" style="left:667.5px;width:200px;text-align:center;top:96px;font-size:10px;line-height:10px;color:#f4f0dc;letter-spacing:-0.1px;filter:url(#cr5);">Регулятор потока зерна на</div>
<div class="t" style="left:667px;width:200px;text-align:center;top:107px;font-size:10px;line-height:10px;color:#f4f0dc;letter-spacing:-0.2px;filter:url(#cr5);">1-ую дранную</div>
<div class="t" style="left:664px;width:200px;text-align:center;top:129px;font-size:12px;line-height:12px;font-weight:bold;letter-spacing:0.5px;">RFP/400</div>
<div class="gb" style="left:728px;top:147px;width:59px;height:11px"></div>
<div class="gb" style="left:728px;top:163px;width:59px;height:11px"></div>
<div class="t" style="left:793px;top:148px;font-size:11px;line-height:11px;">т/ч</div>
<div class="t" style="left:793px;top:165px;font-size:11px;line-height:11px;">т</div>
<div class="t" style="left:662px;width:200px;text-align:center;top:181px;font-size:11px;line-height:11px;">Подача зерна</div>
<div class="t" style="left:663px;width:200px;text-align:center;top:193px;font-size:11px;line-height:11px;letter-spacing:0.15px;">запрещена на пульте</div>
<div class="t" style="left:663px;width:200px;text-align:center;top:206px;font-size:11px;line-height:11px;letter-spacing:0.1px;">местного управления</div>
<div class="t" style="left:807px;width:200px;text-align:center;top:96px;font-size:10px;line-height:10px;color:#f4f0dc;letter-spacing:0.1px;filter:url(#cr5);">Пульт местного</div>
<div class="t" style="left:808px;width:200px;text-align:center;top:106px;font-size:10px;line-height:10px;color:#f4f0dc;letter-spacing:-0.3px;filter:url(#cr5);">управления размолом</div>
<div class="box" style="left:880px;top:121px;width:53px;height:77px"></div>
<div class="cb" style="left:901px;top:130px;width:9px;height:9px">0</div>
<div class="cb" style="left:901px;top:141px;width:9px;height:7px"></div>
<div class="cb" style="left:889px;top:154px;width:10px;height:7px"></div>
<div class="cb" style="left:912px;top:154px;width:10px;height:7px"></div>
<div class="cb" style="left:901px;top:166px;width:9px;height:9px">0</div>
<div class="cb" style="left:901px;top:178px;width:9px;height:7px"></div>
<svg class="i" style="left:992px;top:66px" width="28" height="30" viewBox="0 0 28 30">
<path d="M9,2 H19 L22.5,5.5 V16 L26,20.5 V23 H2 V20.5 L5.5,16 V5.5 Z" fill="#0ff"/>
<path d="M2,22.5 V20.5 L5.5,16 V5.5 L9,2 H19" fill="none" stroke="#000" stroke-width="1"/>
<path d="M19,2 L22.5,5.5 V16 L26,20.5 V23 H2" fill="none" stroke="#fff" stroke-width="1"/>
<path d="M11,23 H19 V24.5 L16,27.5 H14 L11,24.5 Z" fill="#0ff"/>
<path d="M11.5,23 V25 L14,27.5" stroke="#000" fill="none"/><path d="M14,27.5 H16 L18.5,25 V23" stroke="#fff" fill="none"/>
</svg>
<div class="cr" style="left:858px;top:239px;width:75px;height:11px"></div>
<div class="cr" style="left:938px;top:239px;width:75px;height:11px"></div>
<div class="cr" style="left:778px;top:367px;width:75px;height:11px"></div>
<div class="cr" style="left:858px;top:367px;width:75px;height:11px"></div>
<div class="cr" style="left:938px;top:367px;width:75px;height:11px"></div>
<div class="t" style="left:887px;top:260px;font-size:12px;line-height:12px;font-weight:bold;transform:scaleX(1.23);transform-origin:0 0;filter:url(#cr5);">440</div>
<div class="t" style="left:967px;top:260px;font-size:12px;line-height:12px;font-weight:bold;transform:scaleX(1.23);transform-origin:0 0;filter:url(#cr5);">441</div>
<div class="btn" style="left:850px;top:278px"><span>СТАРТ</span></div>
<div class="btn" style="left:850px;top:290px"><span>СТОП</span></div>
<div class="btn" style="left:930px;top:278px"><span>СТАРТ</span></div>
<div class="btn" style="left:930px;top:290px"><span>СТОП</span></div>
<svg class="i" style="left:881px;top:278px" width="22" height="50"><use href="#bin"/></svg>
<svg class="i" style="left:961px;top:278px" width="22" height="50"><use href="#bin"/></svg>
<div class="t" style="left:806px;top:392px;font-size:12px;line-height:12px;font-weight:bold;transform:scaleX(1.23);transform-origin:0 0;filter:url(#cr5);">416</div>
<div class="t" style="left:886px;top:392px;font-size:12px;line-height:12px;font-weight:bold;transform:scaleX(1.23);transform-origin:0 0;filter:url(#cr5);">417</div>
<div class="t" style="left:966px;top:392px;font-size:12px;line-height:12px;font-weight:bold;transform:scaleX(1.23);transform-origin:0 0;filter:url(#cr5);">418</div>
<svg class="i" style="left:800px;top:410px" width="22" height="50"><use href="#bin"/></svg>
<svg class="i" style="left:880px;top:410px" width="22" height="50"><use href="#bin"/></svg>
<svg class="i" style="left:960px;top:410px" width="22" height="50"><use href="#bin"/></svg>
<div class="wl" style="left:811px;top:460px;width:1px;height:6px"></div>
<div class="wl" style="left:811px;top:480px;width:1px;height:74px"></div>
<div class="wl" style="left:763px;top:553px;width:49px;height:1px"></div>
<div class="wl" style="left:763px;top:553px;width:1px;height:24px"></div>
<div class="wl" style="left:759px;top:505px;width:53px;height:1px"></div>
<div class="wl" style="left:759px;top:505px;width:1px;height:15px"></div>
<div class="wl" style="left:743px;top:494px;width:1px;height:26px"></div>
<div class="wl" style="left:755px;top:540px;width:1px;height:37px"></div>
<div class="wl" style="left:891px;top:460px;width:1px;height:6px"></div>
<div class="wl" style="left:891px;top:480px;width:1px;height:90px"></div>
<div class="wl" style="left:839px;top:569px;width:53px;height:1px"></div>
<div class="wl" style="left:839px;top:569px;width:1px;height:52px"></div>
<div class="wl" style="left:971px;top:460px;width:1px;height:126px"></div>
<div class="wl" style="left:919px;top:585px;width:53px;height:1px"></div>
<div class="wl" style="left:919px;top:585px;width:1px;height:81px"></div>
<div class="wl" style="left:688px;top:607px;width:63px;height:1px"></div>
<div class="wl" style="left:769px;top:607px;width:68px;height:1px"></div>
<div class="wl" style="left:844px;top:607px;width:73px;height:1px"></div>
<div class="wl" style="left:924px;top:607px;width:84px;height:1px"></div>
<div class="wl" style="left:688px;top:651px;width:143px;height:1px"></div>
<div class="wl" style="left:849px;top:651px;width:68px;height:1px"></div>
<div class="wl" style="left:924px;top:651px;width:83px;height:1px"></div>
<div class="wl" style="left:772px;top:696px;width:139px;height:1px"></div>
<div class="wl" style="left:929px;top:696px;width:78px;height:1px"></div>
<svg class="i" style="left:804px;top:465px" width="16" height="16"><use href="#mc"/></svg>
<svg class="i" style="left:884px;top:465px" width="16" height="16"><use href="#mc"/></svg>
<div style="position:absolute;left:968px;top:454px;width:6px;height:6px;background:#0ff;border:1px solid #000"></div>
<div class="t" style="left:825px;top:471px;font-size:12px;line-height:12px;font-weight:bold;transform:scaleX(1.23);transform-origin:0 0;filter:url(#cr5);">416A</div>
<div class="t" style="left:905px;top:471px;font-size:12px;line-height:12px;font-weight:bold;transform:scaleX(1.23);transform-origin:0 0;filter:url(#cr5);">417A</div>
<svg class="i" style="left:750px;top:575px" width="19" height="37"><use href="#cyc"/></svg>
<svg class="i" style="left:830px;top:619px" width="19" height="37"><use href="#cyc"/></svg>
<svg class="i" style="left:910px;top:664px" width="19" height="37"><use href="#cyc"/></svg>
<div class="t" style="left:718px;top:588px;font-size:12px;line-height:12px;font-weight:bold;transform:scaleX(1.23);transform-origin:0 0;filter:url(#cr5);">419</div>
<div class="t" style="left:798px;top:632px;font-size:12px;line-height:12px;font-weight:bold;transform:scaleX(1.23);transform-origin:0 0;filter:url(#cr5);">420</div>
<div class="t" style="left:879px;top:677px;font-size:12px;line-height:12px;font-weight:bold;transform:scaleX(1.23);transform-origin:0 0;filter:url(#cr5);">422</div>
<div class="t" style="left:676px;top:596px;font-size:11px;line-height:11px;letter-spacing:0.3px;">От 410</div>
<div class="t" style="left:676px;top:640px;font-size:11px;line-height:11px;letter-spacing:0.3px;">От 413</div>
<div class="t" style="left:936px;top:595px;font-size:11px;line-height:11px;">Высший сорт</div>
<div class="t" style="left:936px;top:639px;font-size:11px;line-height:11px;">1-й сорт</div>
<div class="t" style="left:936px;top:685px;font-size:11px;line-height:11px;">Отруби</div>
<div class="t" style="left:685px;top:420px;font-size:12px;line-height:12px;font-weight:bold;transform:scaleX(1.23);transform-origin:0 0;filter:url(#cr5);">424</div>
<div class="t" style="left:701px;top:524px;font-size:12px;line-height:12px;font-weight:bold;transform:scaleX(1.23);transform-origin:0 0;filter:url(#cr5);">426</div>
<div class="t" style="left:728px;top:670px;font-size:12px;line-height:12px;font-weight:bold;transform:scaleX(1.23);transform-origin:0 0;filter:url(#cr5);">421</div>
<svg class="i" style="left:678px;top:436px" width="72" height="76" viewBox="0 0 72 76">
<g fill="#0ff" stroke="#000" stroke-width="1" shape-rendering="crispEdges">
<rect x="10.5" y="3.5" width="17" height="26"/>
<polygon points="10.5,29.5 27.5,29.5 18,46.5 10.5,46.5"/>
<rect x="22.5" y="34.5" width="2" height="38"/>
<rect x="10.5" y="55.5" width="2" height="17"/>
<rect x="12.5" y="43.5" width="5" height="13"/>
<polygon points="3.5,52.5 12.5,48 12.5,54.5 3.5,55.5"/>
<rect x="3.5" y="55.5" width="1.5" height="3.5"/><rect x="7" y="55.5" width="1.5" height="3.5"/>
<rect x="20.5" y="49.5" width="2" height="4"/>
<rect x="30.5" y="39.5" width="6" height="4"/><rect x="38.5" y="39.5" width="6" height="4"/>
</g>
<g fill="none" stroke="#0ff" stroke-width="1.1">
<path d="M29,53.5 H66 M33.5,50.5 H66 M30,49.5 H32 M57,52 H66 M66.5,47 V56"/>
<path d="M31,47.5 Q34,48 34.5,51 Q36,55 38,56.5 L39.5,54.5 M43,47.5 Q46,48.5 47,52 Q49,55 50.5,56.5 M55,47.5 Q58,48.5 58.5,52 Q61,55 62,56.5 L63.5,55"/>
</g>
</svg>
<svg class="i" style="left:732px;top:518px" width="53" height="24" viewBox="0 0 53 24">
<g fill="#0ff" stroke="#000" stroke-width="1" shape-rendering="crispEdges">
<rect x="4.5" y="1.5" width="36" height="14"/>
<line x1="4" y1="8.5" x2="41" y2="8.5"/>
<rect x="1" y="6" width="3" height="5" fill="#000"/>
<rect x="40.5" y="6.5" width="2" height="3"/>
<path d="M42.5,3.5 H48.5 L50.5,5.5 V12.5 L48.5,13.5 H42.5 Z"/>
<rect x="4.5" y="17.5" width="6" height="4"/><rect x="12.5" y="17.5" width="6" height="4"/><rect x="20.5" y="17.5" width="6" height="4"/>
<rect x="8.5" y="3.5" width="8" height="2" fill="#c8b8b8"/><rect x="26.5" y="3.5" width="8" height="2" fill="#c8b8b8"/><rect x="17.5" y="11.5" width="8" height="2" fill="#c8b8b8"/>
</g>
<circle cx="30.5" cy="12" r="2.5" fill="#0ff" stroke="#000" stroke-width="1"/>
</svg>
<svg class="i" style="left:720px;top:683px" width="50" height="24" viewBox="0 0 50 24">
<path d="M14,9 V6 Q14,3 11,3 H6 Q3,3 3,6 V14 Q3,19 8,19" fill="none" stroke="#000" stroke-width="3"/>
<path d="M14,9 V6 Q14,3 11,3 H6 Q3,3 3,6 V14 Q3,19 8,19" fill="none" stroke="#0ff" stroke-width="1"/>
<g fill="#0ff" stroke="#000" stroke-width="1" shape-rendering="crispEdges">
<rect x="6.5" y="15.5" width="26" height="5"/>
<rect x="32.5" y="17.5" width="3" height="2"/>
<rect x="39.5" y="7.5" width="7" height="5"/><rect x="39.5" y="15.5" width="7" height="5"/>
</g>
<circle cx="13" cy="12" r="3.6" fill="#0ff" stroke="#000" stroke-width="1"/>
<circle cx="27.5" cy="12" r="3.3" fill="#0ff" stroke="#000" stroke-width="1"/>
</svg>
<div id="sb">
<div class="sp" style="left:1px;width:170px"></div>
<div class="sp" style="left:171px;width:852px"></div>
</div>
</body></html>
